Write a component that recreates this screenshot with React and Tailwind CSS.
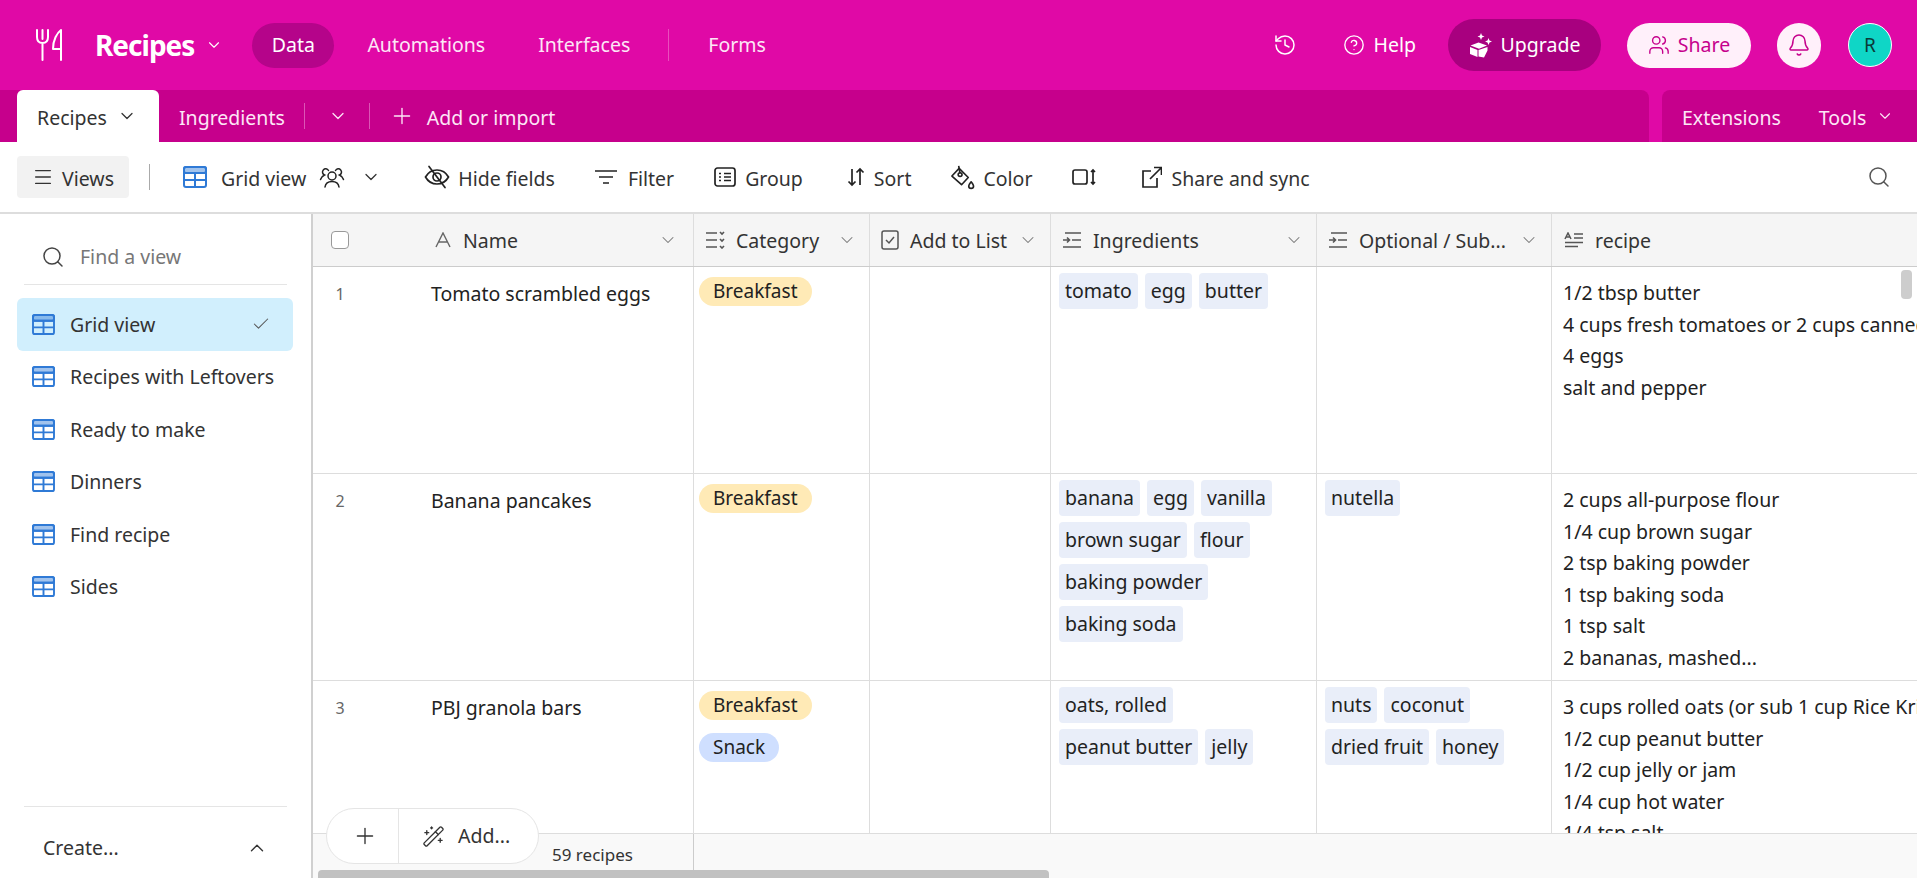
import React from 'react';
import { Menu, ChevronDown, ChevronUp, Plus, History, CircleHelp, Bell, Users, Search, Check, WandSparkles } from 'lucide-react';

const font = { fontFamily: '"Noto Sans", sans-serif' };

const GridIcon = ({ className = '' }) => (
    <svg viewBox="0 0 24 22" className={className} fill="none" stroke="#2f7ad6" strokeWidth="2">
        <rect x="1" y="1" width="22" height="20" rx="2" />
        <rect x="1" y="1" width="22" height="6" rx="2" fill="#2f7ad6" fillOpacity="0.45" />
        <path d="M1 7h22M1 14h22M12 7v14" />
    </svg>
);

const ForkLogo = () => (
    <svg viewBox="0 0 28 34" className="w-[28px] h-[34px]" fill="none" stroke="white" strokeWidth="2" strokeLinecap="round" strokeLinejoin="round">
        <path d="M2 2v7c0 4 2.500 6 5.500 6s5.500-2 5.500-6V2M7.500 2v9M7.500 15v17" />
        <path d="M26 32V2c-4 3-8 10-8 19h8" />
    </svg>
);

const UpgradeIcon = () => (
    <svg viewBox="0 0 24 26" className="w-[24px] h-[26px]" fill="white">
        <path d="M9.500 10.500l8.500 3-8 3.200-8.500-3.200z" />
        <path d="M1 15l7.500 3v7L1 22zM18.500 15v3.500l-3.500 7-5.500-1V18z" />
        <path d="M12 1l1 2.500 2.500 1-2.500 1L12 8l-1-2.500-2.500-1 2.500-1zM19.500 6l1 2.500 2.500 1-2.500 1-1 2.500-1-2.500-2.500-1 2.500-1z" />
    </svg>
);

const CategoryIcon = () => (
    <svg viewBox="0 0 20 18" className="w-[20px] h-[18px]" fill="none" stroke="#555" strokeWidth="1.600">
        <path d="M1 2h11M1 9h11M1 16h11M15 1l2 2 2-2M15 8l2 2 2-2M15 15l2 2 2-2" />
    </svg>
);

const LinkedIcon = () => (
    <svg viewBox="0 0 20 18" className="w-[20px] h-[18px]" fill="none" stroke="#555" strokeWidth="1.600">
        <path d="M3 2h16M10 9h9M1 16h18M1 9h6M5 6.500L7.500 9 5 11.500" />
    </svg>
);

const LongTextIcon = () => (
    <svg viewBox="0 0 20 16" className="w-[20px] h-[16px]" fill="none" stroke="#555" strokeWidth="1.500">
        <path d="M1 7l3-6 3 6M2 5h4M10 2h9M10 6h9M1 10.500h18M1 14.500h13" />
    </svg>
);

const NameIcon = () => (
    <svg viewBox="0 0 16 16" className="w-[16px] h-[16px]" fill="none" stroke="#666" strokeWidth="1.400">
        <path d="M1 15L8 1l7 14M4 10h8" />
    </svg>
);

const CheckboxIcon = () => (
    <svg viewBox="0 0 18 20" className="w-[18px] h-[20px] shrink-0" fill="none" stroke="#555" strokeWidth="1.500">
        <rect x="1" y="1" width="16" height="18" rx="2" />
        <path d="M5 10l3 3 5-6" />
    </svg>
);

const PeopleIcon = () => (
    <svg viewBox="0 0 26 22" className="w-[26px] h-[22px]" fill="none" stroke="#222" strokeWidth="1.500" strokeLinecap="round">
        <circle cx="13" cy="10" r="4" />
        <path d="M6 21c.5-3.500 3-5.500 7-5.500s6.500 2 7 5.500" />
        <path d="M9.500 4.500a3.200 3.200 0 1 0-4 4.500C3.500 10 2 11.500 1.500 13.500M16.500 4.500a3.200 3.200 0 1 1 4 4.500c2 1 3.500 2.500 4 4.500" />
    </svg>
);

const HideIcon = () => (
    <svg viewBox="0 0 26 24" className="w-[26px] h-[24px]" fill="none" stroke="#222" strokeWidth="1.700" strokeLinecap="round">
        <path d="M1.500 12C4 7.500 8 5 13 5s9 2.500 11.500 7C22 16.500 18 19 13 19S4 16.500 1.500 12z" />
        <circle cx="13" cy="12" r="4" />
        <path d="M5 1.500l16 21" />
    </svg>
);

const FilterIcon = () => (
    <svg viewBox="0 0 22 16" className="w-[22px] h-[16px]" fill="none" stroke="#222" strokeWidth="1.600">
        <path d="M0 2h22M4 8h14M8 14h6" />
    </svg>
);

const GroupIcon = () => (
    <svg viewBox="0 0 22 20" className="w-[22px] h-[20px]" fill="none" stroke="#222" strokeWidth="1.700">
        <rect x="1" y="1" width="20" height="18" rx="2.500" />
        <path d="M5 6.500h2M10 6.500h7M5 10h2M10 10h7M5 13.500h2M10 13.500h7" />
    </svg>
);

const SortIcon = () => (
    <svg viewBox="0 0 20 20" className="w-[20px] h-[20px]" fill="none" stroke="#222" strokeWidth="1.700">
        <path d="M6 2v16M2.500 14.500L6 18l3.500-3.500M14 18V2M10.500 5.500L14 2l3.500 3.500" />
    </svg>
);

const ColorIcon = () => (
    <svg viewBox="0 0 26 26" className="w-[25px] h-[25px]" fill="none" stroke="#222" strokeWidth="1.700" strokeLinejoin="round">
        <path d="M9.500 3.500L19 13l-7 7.500L2 11.500z" />
        <circle cx="10.500" cy="10" r="2" />
        <path d="M9 1l1.500 8" />
        <path d="M22 17.500c1.500 2 2.500 3 2.500 4.300a2.500 2.500 0 0 1-5 0c0-1.300 1-2.300 2.500-4.300z" />
    </svg>
);

const RowHeightIcon = () => (
    <svg viewBox="0 0 24 18" className="w-[24px] h-[18px]" fill="none" stroke="#222" strokeWidth="1.700">
        <rect x="1" y="2" width="14" height="14" rx="2" />
        <path d="M21 3v12M19 4l2-2 2 2M19 14l2 2 2-2" />
    </svg>
);

const ShareIcon = () => (
    <svg viewBox="0 0 21 22" className="w-[21px] h-[22px]" fill="none" stroke="#222" strokeWidth="1.700">
        <path d="M10 5H2v16h14v-9M9 13L20 2M13 1.500h7.500V9" />
    </svg>
);

const ToolItem = ({ icon, label, gap = 'gap-[8px]', className = '' }) => (
    <div className={`flex items-center text-[#333] ${gap} ${className}`}>
        {icon}
        {label && <span className="relative top-[2px]">{label}</span>}
    </div>
);

const views = ['Grid view', 'Recipes with Leftovers', 'Ready to make', 'Dinners', 'Find recipe', 'Sides'];

const rows = [
    {
        id: 1,
        name: 'Tomato scrambled eggs',
        category: [['Breakfast', 'bg-[#ffeab6]']],
        ingredients: ['tomato', 'egg', 'butter'],
        optional: [],
        recipe: ['1/2 tbsp butter', '4 cups fresh tomatoes or 2 cups canned tomatoes', '4 eggs', 'salt and pepper'],
    },
    {
        id: 2,
        name: 'Banana pancakes',
        category: [['Breakfast', 'bg-[#ffeab6]']],
        ingredients: ['banana', 'egg', 'vanilla', 'brown sugar', 'flour', 'baking powder', 'baking soda'],
        optional: ['nutella'],
        recipe: ['2 cups all-purpose flour', '1/4 cup brown sugar', '2 tsp baking powder', '1 tsp baking soda', '1 tsp salt', '2 bananas, mashed...'],
    },
    {
        id: 3,
        name: 'PBJ granola bars',
        category: [['Breakfast', 'bg-[#ffeab6]'], ['Snack', 'bg-[#cfdfff]']],
        ingredients: ['oats, rolled', 'peanut butter', 'jelly'],
        optional: ['nuts', 'coconut', 'dried fruit', 'honey'],
        recipe: ['3 cups rolled oats (or sub 1 cup Rice Krispies)', '1/2 cup peanut butter', '1/2 cup jelly or jam', '1/4 cup hot water', '1/4 tsp salt'],
    },
];

const Tag = ({ children }) => (
    <span className="h-[36px] px-[6px] rounded-[4px] bg-[#e9eef9] text-[#222] leading-[36px] whitespace-nowrap">{children}</span>
);

const HeaderCell = ({ icon, label }) => (
    <div className="flex items-center pl-[11px] pr-[12px] border-r border-[#ddd] gap-[11px] min-w-0">
        {icon}
        <span className="flex-1 whitespace-nowrap text-[#333] min-w-0 relative top-[1px]">{label}</span>
        <ChevronDown className="w-[20px] h-[20px] text-[#777] shrink-0" strokeWidth={1.25} />
    </div>
);

export default function App() {
    return (
        <div className="h-screen overflow-hidden flex flex-col bg-white text-[19.5px]" style={font}>
            {/* top bar */}
            <div className="h-[90px] shrink-0 bg-[#e009a6] flex items-center pl-[35px] pr-[25px] text-white">
                <ForkLogo />
                <span className="ml-[32px] text-[28px] font-bold tracking-[-1px]">Recipes</span>
                <ChevronDown className="ml-[11px] w-[18px] h-[18px]" strokeWidth={1.5} />
                <div className="ml-[29px] w-[82px] h-[45px] rounded-full bg-[#b5048a] flex items-center justify-center">Data</div>
                <span className="ml-[33px] text-[#fde6f6]">Automations</span>
                <span className="ml-[53px] text-[#fde6f6]">Interfaces</span>
                <div className="ml-[38px] w-px h-[32px] bg-[#ea4dbd]" />
                <span className="ml-[39px] text-[#fde6f6]">Forms</span>
                <div className="ml-auto flex items-center">
                    <History className="w-[24px] h-[24px]" strokeWidth={1.5} />
                    <CircleHelp className="ml-[46px] w-[22px] h-[22px]" strokeWidth={1.5} />
                    <span className="ml-[9px]">Help</span>
                    <div className="ml-[32px] w-[153px] h-[52px] rounded-full bg-[#a8007f] flex items-center justify-center gap-[8px]">
                        <UpgradeIcon />
                        <span>Upgrade</span>
                    </div>
                    <div className="ml-[26px] w-[124px] h-[45px] rounded-full bg-[#fff0fa] text-[#c6008c] flex items-center justify-center gap-[8px]">
                        <Users className="w-[22px] h-[22px]" strokeWidth={1.5} />
                        <span>Share</span>
                    </div>
                    <div className="ml-[26px] w-[44px] h-[45px] rounded-full bg-[#fff0fa] flex items-center justify-center">
                        <Bell className="w-[24px] h-[24px] text-[#c6008c]" strokeWidth={1.5} />
                    </div>
                    <div className="ml-[27px] w-[44px] h-[44px] rounded-full bg-[#0fd6c6] border border-white text-[#0b3b38] flex items-center justify-center text-[19px]">R</div>
                </div>
            </div>

            {/* table tabs */}
            <div className="h-[52px] shrink-0 bg-[#e009a6] flex">
                <div className="w-[1649px] bg-[#c6008c] rounded-tr-[8px] flex items-center pl-[17px] text-[#fde6f6]">
                    <div className="w-[142px] h-[52px] bg-white rounded-t-[6px] flex items-center pl-[20px] gap-[10px] text-[#333]">
                        <span className="relative top-[2px]">Recipes</span>
                        <ChevronDown className="w-[20px] h-[20px]" strokeWidth={1.5} />
                    </div>
                    <span className="ml-[20px] relative top-[2px]">Ingredients</span>
                    <div className="ml-[19px] w-px h-[26px] bg-[#dc55b6]" />
                    <ChevronDown className="ml-[23px] w-[20px] h-[20px]" strokeWidth={1.5} />
                    <div className="ml-[21px] w-px h-[26px] bg-[#dc55b6]" />
                    <Plus className="ml-[19px] w-[26px] h-[26px]" strokeWidth={1.25} />
                    <span className="ml-[12px] relative top-[2px]">Add or import</span>
                </div>
                <div className="ml-[13px] flex-1 bg-[#c6008c] rounded-tl-[8px] flex items-center pl-[20px] text-[#fde6f6]">
                    <span className="relative top-[2px]">Extensions</span>
                    <span className="ml-[38px] relative top-[2px]">Tools</span>
                    <ChevronDown className="ml-[10px] w-[18px] h-[18px]" strokeWidth={1.5} />
                </div>
            </div>

            {/* toolbar */}
            <div className="h-[72px] shrink-0 border-b-2 border-[#ddd] flex items-center pl-[17px] pr-[26px] text-[#333]">
                <div className="w-[112px] h-[42px] rounded-[4px] bg-[#f2f2f2] flex items-center justify-center gap-[8px]">
                    <Menu className="w-[22px] h-[22px]" strokeWidth={1.5} />
                    <span className="relative top-[2px]">Views</span>
                </div>
                <div className="ml-[20px] w-px h-[26px] bg-[#aaa]" />
                <GridIcon className="ml-[33px] w-[24px] h-[22px]" />
                <span className="ml-[14px] relative top-[2px]">Grid view</span>
                <div className="ml-[13px]"><PeopleIcon /></div>
                <ChevronDown className="ml-[16px] w-[20px] h-[20px]" strokeWidth={1.5} />
                <ToolItem className="ml-[43px]" icon={<HideIcon />} label="Hide fields" />
                <ToolItem className="ml-[40px]" gap="gap-[11px]" icon={<FilterIcon />} label="Filter" />
                <ToolItem className="ml-[40px]" gap="gap-[9px]" icon={<GroupIcon />} label="Group" />
                <ToolItem className="ml-[43px]" icon={<SortIcon />} label="Sort" />
                <ToolItem className="ml-[39px]" icon={<ColorIcon />} label="Color" />
                <ToolItem className="ml-[40px]" icon={<RowHeightIcon />} />
                <ToolItem className="ml-[45px]" gap="gap-[9px]" icon={<ShareIcon />} label="Share and sync" />
                <Search className="ml-auto w-[24px] h-[24px] text-[#555]" strokeWidth={1.5} />
            </div>

            <div className="flex-1 flex min-h-0">
                {/* sidebar */}
                <div className="w-[313px] shrink-0 border-r-2 border-[#d0d0d0] flex flex-col">
                    <div className="mx-[24px] h-[71px] pt-[15px] border-b border-[#e5e5e5] flex items-center pl-[17px] gap-[15px] text-[#777]">
                        <Search className="w-[24px] h-[24px] text-[#444]" strokeWidth={1.5} />
                        <span>Find a view</span>
                    </div>
                    <div className="mt-[13px] ml-[17px] mr-[18px] flex flex-col">
                        {views.map((view, i) => (
                            <div key={view} className={`h-[52.5px] flex items-center pl-[15px] pr-[22px] gap-[15px] rounded-[6px] text-[#333] ${i === 0 ? 'bg-[#d1effd]' : ''}`}>
                                <GridIcon className="w-[23px] h-[21px] shrink-0" />
                                <span className="flex-1 whitespace-nowrap">{view}</span>
                                {i === 0 && <Check className="w-[20px] h-[20px] text-[#555]" strokeWidth={1.25} />}
                            </div>
                        ))}
                    </div>
                    <div className="mt-auto mx-[24px] h-[72px] pt-[10px] border-t border-[#e5e5e5] flex items-center justify-between pl-[19px] pr-[19px] text-[#333]">
                        <span>Create...</span>
                        <ChevronUp className="w-[22px] h-[22px]" strokeWidth={1.5} />
                    </div>
                </div>

                {/* grid */}
                <div className="relative flex-1 min-w-0 flex flex-col">
                    <div className="h-[53px] shrink-0 bg-[#f5f5f5] border-b border-[#ccc] grid grid-cols-[381px_176px_181px_266px_235px_1fr]">
                        <div className="flex items-center pl-[18px] pr-[7px] border-r border-[#ddd]">
                            <div className="w-[18px] h-[18px] rounded-[4px] border border-[#999] bg-white" />
                            <div className="ml-[86px]"><NameIcon /></div>
                            <span className="ml-[12px] flex-1 text-[#333] relative top-[1px]">Name</span>
                            <ChevronDown className="w-[20px] h-[20px] text-[#777] mr-[8px]" strokeWidth={1.25} />
                        </div>
                        <HeaderCell icon={<CategoryIcon />} label="Category" />
                        <HeaderCell icon={<CheckboxIcon />} label="Add to List" />
                        <HeaderCell icon={<LinkedIcon />} label="Ingredients" />
                        <HeaderCell icon={<LinkedIcon />} label="Optional / Sub..." />
                        <div className="flex items-center pl-[12px] gap-[11px] text-[#333]">
                            <LongTextIcon />
                            <span className="relative top-[1px]">recipe</span>
                        </div>
                    </div>
                    <div className="flex-1 overflow-hidden min-h-0">
                        {rows.map((row) => (
                            <div key={row.id} className="h-[207px] border-b border-[#ddd] grid grid-cols-[381px_176px_181px_266px_235px_1fr]">
                                <div className="flex border-r border-[#ddd] pt-[13px] leading-[28px]">
                                    <span className="w-[54px] text-center text-[#666] text-[16px]">{row.id}</span>
                                    <span className="ml-[64px] text-[#222]">{row.name}</span>
                                </div>
                                <div className="border-r border-[#ddd] pl-[5px] pt-[10px] flex flex-col items-start gap-[13px]">
                                    {row.category.map(([label, color]) => (
                                        <span key={label} className={`h-[29px] px-[14px] rounded-full leading-[29px] text-[19px] text-[#222] ${color}`}>{label}</span>
                                    ))}
                                </div>
                                <div className="border-r border-[#ddd]" />
                                <div className="border-r border-[#ddd] pl-[8px] pt-[6px] flex flex-wrap content-start gap-x-[7px] gap-y-[6px]">
                                    {row.ingredients.map((item) => <Tag key={item}>{item}</Tag>)}
                                </div>
                                <div className="border-r border-[#ddd] pl-[8px] pt-[6px] flex flex-wrap content-start gap-x-[7px] gap-y-[6px]">
                                    {row.optional.map((item) => <Tag key={item}>{item}</Tag>)}
                                </div>
                                <div className="pl-[11px] pt-[10px] leading-[31.6px] text-[#222] overflow-hidden whitespace-nowrap">
                                    {row.recipe.map((line) => <div key={line}>{line}</div>)}
                                </div>
                            </div>
                        ))}
                    </div>
                    <div className="h-[45px] shrink-0 bg-[#f9f9f9] border-t border-[#ddd] flex">
                        <div className="w-[381px] border-r border-[#ccc] pl-[239px] pt-[8px] text-[17px] text-[#333] whitespace-nowrap">59 recipes</div>
                    </div>

                    {/* floating add button */}
                    <div className="absolute left-[13px] bottom-[14px] w-[213px] h-[56px] rounded-full bg-white border border-[#e5e5e5] flex items-center text-[#333]">
                        <div className="w-[72px] h-full border-r border-[#e5e5e5] flex items-center justify-center pl-[4px]">
                            <Plus className="w-[26px] h-[26px]" strokeWidth={1.25} />
                        </div>
                        <WandSparkles className="ml-[23px] w-[23px] h-[23px]" strokeWidth={1.4} />
                        <span className="ml-[13px]">Add...</span>
                    </div>

                    {/* scrollbars */}
                    <div className="absolute left-[5px] bottom-0 w-[731px] h-[8px] rounded-t-[4px] bg-[#c1c1c1]" />
                    <div className="absolute right-[5px] top-[56px] w-[11px] h-[29px] rounded-[4px] bg-[#cdcdcd]" />
                </div>
            </div>
        </div>
    );
}
